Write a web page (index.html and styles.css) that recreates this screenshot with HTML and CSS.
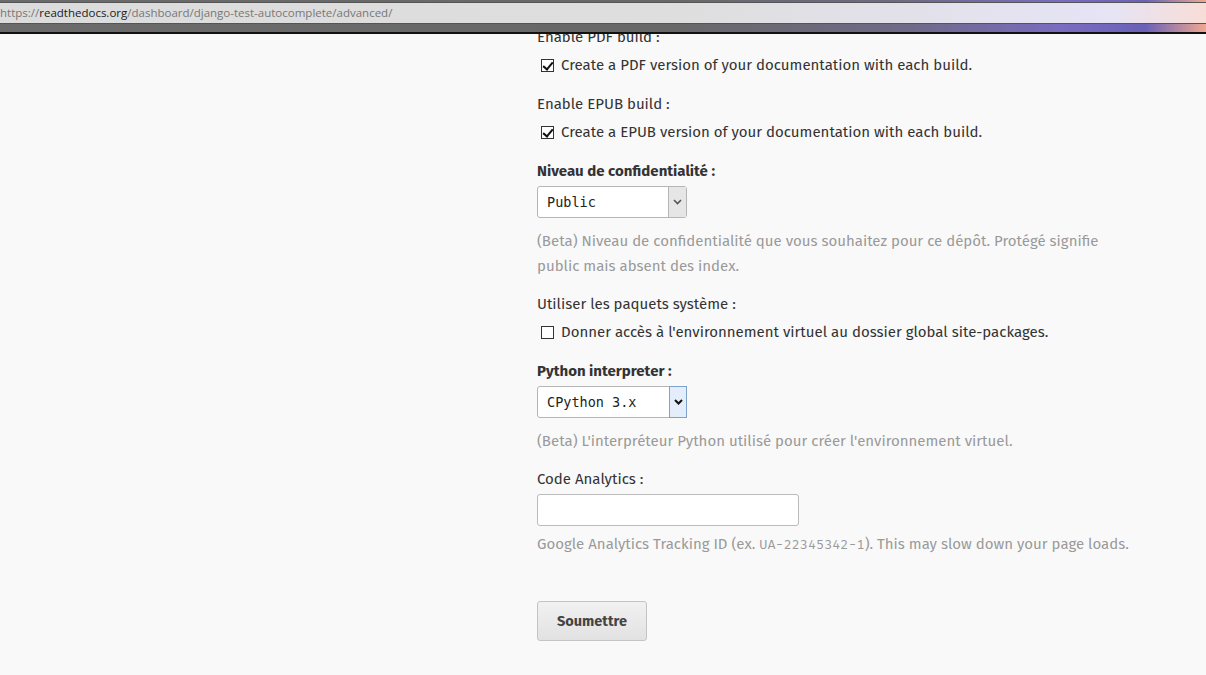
FILE: index.html
```html
<!DOCTYPE html>
<html>
<head>
<meta charset="utf-8">
<link rel="stylesheet" href="styles.css">
</head>
<body>
<div class="chrome">
  <div class="urlbar"><span class="proto">https://</span><span class="host">readthedocs.org</span><span class="path">/dashboard/django-test-autocomplete/advanced/</span></div>
</div>
<main class="page">
  <form class="form">
    <div class="field">
      <label class="label">Enable PDF build :</label>
      <label class="check"><span class="box checked"></span>Create a PDF version of your documentation with each build.</label>
    </div>
    <div class="field">
      <label class="label">Enable EPUB build :</label>
      <label class="check"><span class="box checked"></span>Create a EPUB version of your documentation with each build.</label>
    </div>
    <div class="field">
      <label class="label bold">Niveau de confidentialité :</label>
      <div class="select"><span class="value">Public</span><span class="arrow"><svg width="9" height="6" viewBox="0 0 9 6"><path d="M1 1 L4.5 4.5 L8 1" fill="none" stroke="#555" stroke-width="1.6"/></svg></span></div>
      <p class="help">(Beta) Niveau de confidentialité que vous souhaitez pour ce dépôt. Protégé signifie public mais absent des index.</p>
    </div>
    <div class="field">
      <label class="label">Utiliser les paquets système :</label>
      <label class="check"><span class="box"></span>Donner accès à l'environnement virtuel au dossier global site-packages.</label>
    </div>
    <div class="field">
      <label class="label bold">Python interpreter :</label>
      <div class="select focus"><span class="value">CPython 3.x</span><span class="arrow"><svg width="9" height="6" viewBox="0 0 9 6"><path d="M1 1 L4.5 4.5 L8 1" fill="none" stroke="#111" stroke-width="2"/></svg></span></div>
      <p class="help">(Beta) L'interpréteur Python utilisé pour créer l'environnement virtuel.</p>
    </div>
    <div class="field">
      <label class="label">Code Analytics :</label>
      <input class="text" type="text">
      <p class="help help-tight">Google Analytics Tracking ID (ex. <code>UA-22345342-1</code>). This may slow down your page loads.</p>
    </div>
    <div class="actions">
      <button type="button" class="btn">Soumettre</button>
    </div>
  </form>
</main>
</body>
</html>
```
FILE: styles.css
```css
* { box-sizing: border-box; }
html, body { margin: 0; padding: 0; }
body {
  background: #f9f9f9;
  font-family: "Fira Sans", "Open Sans", "Noto Sans", sans-serif;
  color: #444;
  font-size: 15px;
  width: 1206px;
  height: 675px;
  overflow: hidden;
}
.chrome {
  position: fixed;
  top: 0; left: 0; right: 0;
  height: 34px;
  background: linear-gradient(90deg, #6b6b6b 0%, #686868 55%, #6f6a86 75%, #7a6cc0 88%, #6a62b8 95%, #f0a890 100%);
  border-bottom: 2px solid #111;
  z-index: 5;
}
.urlbar {
  margin-top: 2px;
  height: 22px;
  background: linear-gradient(90deg, #dcdcdc 0%, #dedede 55%, #e2e1ea 75%, #e6e4f5 92%, #f8ddd6 100%);
  border-top: 1px solid #555;
  border-bottom: 1px solid #555;
  font-family: "Open Sans", sans-serif;
  font-size: 11.5px;
  line-height: 20px;
  color: #777;
  white-space: nowrap;
}
.urlbar .host { color: #1a1a1a; }
.page {
  padding: 26px 0 0 537px;
}
.form { width: 600px; }
.field { margin-bottom: 16px; }
.label {
  display: block;
  line-height: 23px;
  color: #333;
}
.label.bold { font-weight: 700; }
.check {
  display: flex;
  align-items: center;
  gap: 7px;
  line-height: 24px;
  margin-top: 4px;
  padding-left: 4px;
  color: #333;
}
.box {
  width: 13px; height: 13px;
  border: 1px solid #333;
  background: #fff;
  position: relative;
  flex: none;
}
.box.checked::after {
  content: "";
  position: absolute;
  left: 3px; top: 0px;
  width: 4px; height: 8px;
  border: solid #111;
  border-width: 0 2px 2px 0;
  transform: rotate(40deg);
}
.select {
  display: flex;
  width: 150px;
  height: 32px;
  border: 1px solid #b5b5b5;
  border-radius: 3px;
  background: #fff;
  margin-top: 3px;
}
.select .value {
  flex: 1;
  font-family: "DejaVu Sans Mono", monospace;
  font-size: 13.5px;
  color: #222;
  line-height: 30px;
  padding-left: 9px;
}
.select .arrow {
  width: 18px;
  display: flex;
  align-items: center;
  justify-content: center;
  background: #e6e6e6;
  border-left: 1px solid #b5b5b5;
}
.select.focus .arrow {
  background: #e4eefb;
  border: 1px solid #7da2ce;
  margin: -1px -1px -1px 0;
}
.help {
  margin: 11px 0 -2px;
  line-height: 25px;
  color: #9a9a9a;
}
.help.help-tight { margin-top: 6px; }
.help code {
  font-family: "Fira Mono", "DejaVu Sans Mono", monospace;
  font-size: 13.5px;
}
.text {
  display: block;
  width: 262px;
  height: 32px;
  border: 1px solid #bbb;
  border-radius: 3px;
  background: #fff;
  margin-top: 3px;
}
.actions { padding-top: 30px; }
.btn {
  width: 110px;
  height: 40px;
  border: 1px solid #c4c4c4;
  border-radius: 3px;
  background: linear-gradient(#f1f1f1, #e2e2e2);
  font-family: "Fira Sans", "Open Sans", sans-serif;
  font-weight: 700;
  font-size: 14.5px;
  color: #444;
}
```
